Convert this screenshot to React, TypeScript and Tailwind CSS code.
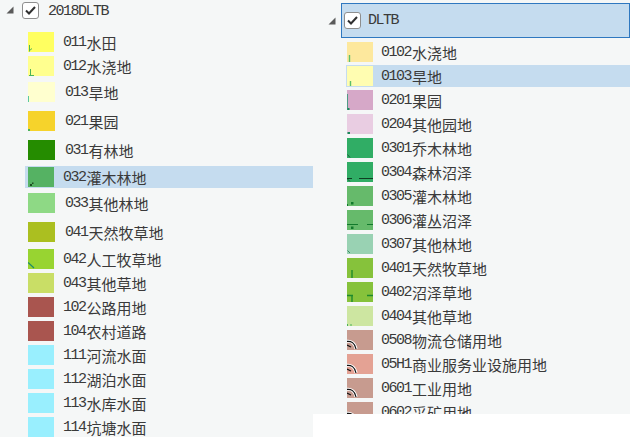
import React from "react";

type Item = { code: string; name: string; color: string; mark?: React.ReactNode; wide?: boolean; mt?: string; sel?: boolean };

const green = "#4cb35a";

const curve = (
  <>
    <path d="M-1 11.5 C4 10.5 8 13 9 19" stroke="#fff" strokeWidth="3" fill="none" />
    <path d="M-1 11.5 C4 10.5 8 13 9 19" stroke="#111" strokeWidth="1.2" fill="none" />
    <path d="M0 15 L4 17" stroke="#111" strokeWidth="1.2" />
  </>
);

const leftItems: Item[] = [
  { code: "011", name: "水田", color: "#ffff60", mt: "mt-[11px]", mark: <path d="M1.5 13 V19.5 M1 19 L4 16.5" stroke={green} strokeWidth="1" fill="none" /> },
  { code: "012", name: "水浇地", color: "#ffff8f", mt: "mt-[2px]", mark: <path d="M2.5 13 V19.5 M1 19.5 H6" stroke={green} strokeWidth="1" fill="none" /> },
  { code: "013", name: "旱地", color: "#ffffcf", mt: "mt-[4px]", wide: true, mark: <path d="M0.5 14 V20" stroke="#5ac8a0" strokeWidth="1" /> },
  { code: "021", name: "果园", color: "#f6d32b", mt: "mt-[7px]", wide: true, mark: <rect x="0" y="18" width="2" height="2" fill={green} /> },
  { code: "031", name: "有林地", color: "#258c00", mt: "mt-[7px]", wide: true },
  { code: "032", name: "灌木林地", color: "#55b263", mt: "mt-[5px]", sel: true, mark: <path d="M2 17 h2 v2 h-2z M4 15.5 h1.5 v1.5 h-1.5z" fill="#1d4d22" /> },
  { code: "033", name: "其他林地", color: "#8ed985", mt: "mt-[4px]", wide: true },
  { code: "041", name: "天然牧草地", color: "#abbf20", mt: "mt-[7px]", wide: true },
  { code: "042", name: "人工牧草地", color: "#98d431", mt: "mt-[5px]", mark: <path d="M0 13.5 L6 19" stroke="#1b8a6b" strokeWidth="1.2" /> },
  { code: "043", name: "其他草地", color: "#c9de66", mt: "mt-[2px]" },
  { code: "102", name: "公路用地", color: "#a9554f", mt: "mt-[2px]" },
  { code: "104", name: "农村道路", color: "#a9554f", mt: "mt-[2px]" },
  { code: "111", name: "河流水面", color: "#99effe", mt: "mt-[2px]" },
  { code: "112", name: "湖泊水面", color: "#99effe", mt: "mt-[2px]" },
  { code: "113", name: "水库水面", color: "#99effe", mt: "mt-[2px]" },
  { code: "114", name: "坑塘水面", color: "#99effe", mt: "mt-[2px]" },
];

const rightItems: Item[] = [
  { code: "0102", name: "水浇地", color: "#fde89d", mark: <path d="M2.5 13 V20" stroke="#5cc06a" strokeWidth="1.4" /> },
  { code: "0103", name: "旱地", color: "#fffdb1", sel: true, mark: <path d="M3.5 15 V20" stroke="#5cc06a" strokeWidth="1.4" /> },
  { code: "0201", name: "果园", color: "#d6a8c8", mark: <><path d="M0.5 4 V20" stroke="#4f9a86" strokeWidth="1" /><rect x="0.5" y="18" width="2" height="2" fill="#1d8a5a" /></> },
  { code: "0204", name: "其他园地", color: "#e9cde2", mark: <rect x="0.5" y="18" width="2.5" height="2" fill="#1d8a5a" /> },
  { code: "0301", name: "乔木林地", color: "#30ad65", mark: <path d="M0.5 16.5 L3 19.5" stroke="#1f5f3a" strokeWidth="1" /> },
  { code: "0304", name: "森林沼泽", color: "#30ad65", mark: <><path d="M0 16.5 H5 M12 16.5 H26" stroke="#0f3d22" strokeWidth="1.2" /><path d="M0.5 17 L3 19.5" stroke="#1f5f3a" strokeWidth="1" /></> },
  { code: "0305", name: "灌木林地", color: "#66ba6b", mark: <><rect x="4" y="16" width="2.5" height="2.5" fill="#127a2c" /><path d="M0.5 18 V20" stroke="#127a2c" /></> },
  { code: "0306", name: "灌丛沼泽", color: "#66ba6b", mark: <><path d="M0 14.5 H11 M20 14.5 H26" stroke="#127a2c" strokeWidth="1.2" /><rect x="4" y="16.5" width="2.5" height="2.5" fill="#127a2c" /></> },
  { code: "0307", name: "其他林地", color: "#99d2b3", mark: <path d="M0.5 16.5 L3 19" stroke="#3f8a66" strokeWidth="1" /> },
  { code: "0401", name: "天然牧草地", color: "#86c23b", mark: <path d="M5 12 V20" stroke="#1f8a2c" strokeWidth="1.4" /> },
  { code: "0402", name: "沼泽草地", color: "#86c23b", mark: <path d="M0 13.5 H6 M5 13.5 V20 M20 13.5 H26" stroke="#1f8a2c" strokeWidth="1.4" fill="none" /> },
  { code: "0404", name: "其他草地", color: "#cde6a1", mark: <path d="M0.5 18 V20 M4 18 V20" stroke="#4cb35a" strokeWidth="1" /> },
  { code: "0508", name: "物流仓储用地", color: "#c79b8f", mark: curve },
  { code: "05H1", name: "商业服务业设施用地", color: "#e4a294", mark: curve },
  { code: "0601", name: "工业用地", color: "#c79b8f", mark: curve },
  { code: "0602", name: "采矿用地", color: "#c79b8f", mark: curve },
];

function Swatch({ item, w }: { item: Item; w: number }) {
  return (
    <div className={`relative h-[20px] shrink-0 ${w === 27 ? "w-[27px]" : "w-[26px]"}`} style={{ backgroundColor: item.color }}>
      {item.mark && (
        <svg className="absolute inset-0" width={w} height={20} viewBox={`0 0 ${w} 20`}>
          {item.mark}
        </svg>
      )}
    </div>
  );
}

function Label({ item }: { item: Item }) {
  return (
    <span className="whitespace-nowrap text-[#3a3a3a] leading-none flex items-center">
      <span className="font-['Liberation_Mono',monospace] text-[15px] tracking-[-1.5px]">{item.code}</span>
      <span className="ml-[1px] font-['Noto_Sans_CJK_SC',sans-serif] text-[15px]">{item.name}</span>
    </span>
  );
}

function Triangle() {
  return (
    <svg width="8" height="8" viewBox="0 0 8 8" className="shrink-0">
      <polygon points="7.5,0.5 7.5,7.5 0.5,7.5" fill="#5a5a5a" />
    </svg>
  );
}

function Check() {
  return (
    <div className="w-[17px] h-[17px] shrink-0 rounded-[3px] border border-[#8e8e8e] bg-white flex items-center justify-center">
      <svg width="13" height="13" viewBox="0 0 13 13">
        <path d="M2 6.5 L5 9.5 L11 3" stroke="#303030" strokeWidth="2" fill="none" />
      </svg>
    </div>
  );
}

export default function App() {
  return (
    <div className="w-[630px] h-[446px] bg-white overflow-hidden flex items-start">
      <div className="w-[313px] h-[437px] bg-[#f5f7f7] overflow-hidden shrink-0">
        <div className="flex items-center h-[20px] pl-[6px]">
          <Triangle />
          <div className="ml-[8px]">
            <Check />
          </div>
          <span className="ml-[9px] mt-[3px] font-['Liberation_Mono',monospace] text-[15px] tracking-[-1.5px] text-[#3a3a3a] leading-none">2018DLTB</span>
        </div>
        {leftItems.map((it) => (
          <div key={it.code} className={`flex items-center h-[22px] ml-[25px] ${it.mt} ${it.sel ? "bg-[#c5dcef]" : ""}`}>
            <div className="ml-[3px]">
              <Swatch item={it} w={it.wide ? 27 : 26} />
            </div>
            <div className={it.wide ? "ml-[10px]" : "ml-[9px]"}>
              <Label item={it} />
            </div>
          </div>
        ))}
      </div>
      <div className="flex-1 h-[414px] bg-[#f5f7f7] overflow-hidden">
        <div className="flex items-center mt-[3px] h-[35px]">
          <div className="ml-[15px]">
            <Triangle />
          </div>
          <div className="ml-[5px] flex-1 h-[35px] bg-[#c5dcef] border border-[#2f78c0] flex items-center pl-[2px]">
            <Check />
            <span className="ml-[7px] font-['Liberation_Mono',monospace] text-[15px] tracking-[-1.5px] text-[#3a3a3a] leading-none">DLTB</span>
          </div>
        </div>
        <div className="mt-[3px] flex flex-col gap-[2px]">
          {rightItems.map((it) => (
            <div key={it.code} className={`flex items-center h-[22px] ml-[33px] ${it.sel ? "bg-[#c5dcef]" : ""}`}>
              <div className="ml-[1px]">
                <Swatch item={it} w={26} />
              </div>
              <div className="ml-[8px]">
                <Label item={it} />
              </div>
            </div>
          ))}
        </div>
      </div>
    </div>
  );
}
